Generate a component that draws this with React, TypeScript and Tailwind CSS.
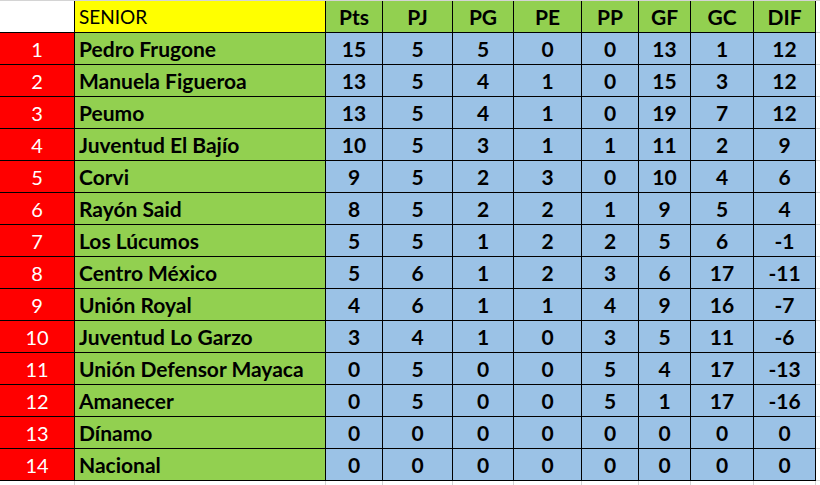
const cols = ['w-[75px]', 'w-[251px]', 'w-[57px]', 'w-[70px]', 'w-[61px]', 'w-[68px]', 'w-[57px]', 'w-[52px]', 'w-[63px]', 'w-[62px]'];

const headers = ['Pts', 'PJ', 'PG', 'PE', 'PP', 'GF', 'GC', 'DIF'];

const rows: [string, number[]][] = [
  ['Pedro Frugone', [15, 5, 5, 0, 0, 13, 1, 12]],
  ['Manuela Figueroa', [13, 5, 4, 1, 0, 15, 3, 12]],
  ['Peumo', [13, 5, 4, 1, 0, 19, 7, 12]],
  ['Juventud El Bajío', [10, 5, 3, 1, 1, 11, 2, 9]],
  ['Corvi', [9, 5, 2, 3, 0, 10, 4, 6]],
  ['Rayón Said', [8, 5, 2, 2, 1, 9, 5, 4]],
  ['Los Lúcumos', [5, 5, 1, 2, 2, 5, 6, -1]],
  ['Centro México', [5, 6, 1, 2, 3, 6, 17, -11]],
  ['Unión Royal', [4, 6, 1, 1, 4, 9, 16, -7]],
  ['Juventud Lo Garzo', [3, 4, 1, 0, 3, 5, 11, -6]],
  ['Unión Defensor Mayaca', [0, 5, 0, 0, 5, 4, 17, -13]],
  ['Amanecer', [0, 5, 0, 0, 5, 1, 17, -16]],
  ['Dínamo', [0, 0, 0, 0, 0, 0, 0, 0]],
  ['Nacional', [0, 0, 0, 0, 0, 0, 0, 0]],
];

export default function App() {
  return (
    <div className="w-[820px] h-[485px] bg-white overflow-hidden text-black font-['Lato','Liberation_Sans',sans-serif] text-[21px] leading-none">
      {/* header row */}
      <div className="flex h-[33px] border-t border-[#d4d4d4]">
        <div className={`${cols[0]} shrink-0 bg-white border-r border-b border-black`} />
        <div className={`${cols[1]} shrink-0 bg-[#ffff00] border-r border-b border-black flex items-center pl-[4px] text-[19px]`}>SENIOR</div>
        {headers.map((h, i) => (
          <div key={h} className={`${cols[i + 2]} shrink-0 bg-[#92d050] border-r border-b border-black flex items-center justify-center font-bold`}>
            {h}
          </div>
        ))}
        <div className="flex-1 border-b border-[#d4d4d4]" />
      </div>

      {/* standings */}
      {rows.map(([team, nums], r) => (
        <div key={team} className="flex h-[32px]">
          <div className={`${cols[0]} shrink-0 bg-[#ff0000] text-white border-r border-b border-black flex items-center justify-center text-[20px]`}>
            {r + 1}
          </div>
          <div className={`${cols[1]} shrink-0 bg-[#92d050] border-r border-b border-black flex items-center pl-[4px] font-bold`}>
            {team}
          </div>
          {nums.map((n, i) => (
            <div key={i} className={`${cols[i + 2]} shrink-0 bg-[#9bc2e6] border-r border-b border-black flex items-center justify-center font-bold`}>
              {n}
            </div>
          ))}
          <div className="flex-1 border-b border-[#d4d4d4]" />
        </div>
      ))}

      {/* empty sheet row below */}
      <div className="flex h-[20px]">
        {cols.map((c, i) => (
          <div key={i} className={`${c} shrink-0 border-r border-[#d4d4d4]`} />
        ))}
      </div>
    </div>
  );
}
